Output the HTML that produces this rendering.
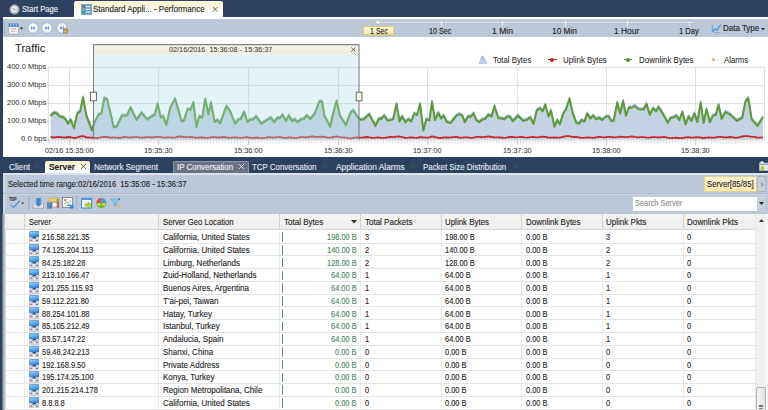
<!DOCTYPE html>
<html><head><meta charset="utf-8">
<style>
*{margin:0;padding:0;box-sizing:border-box}
html,body{width:768px;height:410px;overflow:hidden;background:#2f4161}
body{font-family:"Liberation Sans", sans-serif;font-size:8px;color:#1e1e1e;position:relative}
.a{position:absolute}
.t{position:absolute;white-space:pre;line-height:1;-webkit-text-stroke:0.12px currentColor}
</style></head><body>

<svg class="a" style="left:9px;top:3.9px" width="11" height="11" viewBox="0 0 11 11">
<defs><radialGradient id="clk" cx="0.4" cy="0.35" r="0.7"><stop offset="0" stop-color="#ffffff"/><stop offset="1" stop-color="#c8cacc"/></radialGradient></defs>
<circle cx="5.5" cy="5.5" r="4.9" fill="#a8acb0" stroke="#7c8086" stroke-width="0.6"/>
<circle cx="5.5" cy="5.5" r="3.7" fill="url(#clk)"/>
<path d="M5.5 5.5 L3.6 4" stroke="#666" stroke-width="0.8"/><path d="M5.5 5.5 L7 5.5" stroke="#888" stroke-width="0.6"/>
</svg>
<div class="a" style="left:74.3px;top:1px;width:149px;height:18px;background:linear-gradient(#fdf3d6 0,#fdf6e2 40%,#ffffff 58%);border-radius:2px 2px 0 0"></div>
<svg class="a" style="left:80.5px;top:4px" width="11" height="11" viewBox="0 0 11 11">
<rect x="0.4" y="0.4" width="10.2" height="10.2" fill="#5aa0dc" stroke="#7f9ab8" stroke-width="0.8"/>
<rect x="2" y="1.8" width="2" height="1.8" fill="#b04050"/><rect x="4.8" y="2" width="4.6" height="1.2" fill="#e6f0fa"/>
<rect x="2" y="4.6" width="2" height="1.6" fill="#e0a030"/><rect x="4.8" y="4.8" width="4.6" height="1.2" fill="#e6f0fa"/>
<rect x="2" y="7.2" width="2" height="1.8" fill="#20b040"/><rect x="4.8" y="7.5" width="4.6" height="1.2" fill="#e6f0fa"/>
</svg>
<svg class="a" style="left:212.30px;top:5.80px" width="6.6" height="6.6" viewBox="0 0 6.6 6.6"><path d="M1,1 L5.6,5.6 M5.6,1 L1,5.6" stroke="#5a5048" stroke-width="0.9"/></svg>
<div class="a" style="left:3px;top:17.2px;width:765px;height:2.2px;background:#ffffff"></div>
<div class="a" style="left:3px;top:19.4px;width:765px;height:17.2px;background:#bcc7d8"></div>
<div class="a" style="left:4.3px;top:21px;width:1px;height:14px;background:#a6b3c7"></div>
<svg class="a" style="left:8px;top:22.5px" width="17" height="12" viewBox="0 0 17 12">
<rect x="0.8" y="0.7" width="9.6" height="10.3" fill="#f2f2f2" stroke="#a8a8a8" stroke-width="0.6"/>
<rect x="0.8" y="0.7" width="9.6" height="3" fill="#3070d0"/>
<rect x="2" y="1.3" width="1.6" height="1.2" fill="#e8eefa"/><rect x="4.8" y="1.3" width="1.6" height="1.2" fill="#e8eefa"/><rect x="7.6" y="1.3" width="1.6" height="1.2" fill="#e8eefa"/>
<text x="2.8" y="9" font-size="4.6" fill="#888" font-family="Liberation Sans">17</text>
<path d="M11.8 4.6 L15.2 4.6 L13.5 6.4 Z" fill="#222"/>
</svg>
<svg class="a" style="left:25.799999999999997px;top:21.2px" width="14" height="14" viewBox="0 0 14 14"><defs><radialGradient id="cg32" cx="0.5" cy="0.4" r="0.6"><stop offset="0" stop-color="#ffffff"/><stop offset="1" stop-color="#e2eaf4"/></radialGradient></defs><circle cx="7" cy="7" r="5.3" fill="url(#cg32)" stroke="#9eb2cc" stroke-width="0.8"/><path d="M5.6 5.2 V8.8" stroke="#3a86d8" stroke-width="0.8"/><path d="M8.6 5.2 L6.2 7 L8.6 8.8 Z" fill="#3a86d8"/></svg>
<svg class="a" style="left:40.4px;top:21.2px" width="14" height="14" viewBox="0 0 14 14"><defs><radialGradient id="cg47" cx="0.5" cy="0.4" r="0.6"><stop offset="0" stop-color="#ffffff"/><stop offset="1" stop-color="#e2eaf4"/></radialGradient></defs><circle cx="7" cy="7" r="5.3" fill="url(#cg47)" stroke="#9eb2cc" stroke-width="0.8"/><path d="M8.4 5.2 V8.8" stroke="#3a86d8" stroke-width="0.8"/><path d="M5.4 5.2 L7.8 7 L5.4 8.8 Z" fill="#3a86d8"/></svg>
<svg class="a" style="left:55px;top:21.2px" width="14" height="14" viewBox="0 0 14 14"><defs><radialGradient id="cg62" cx="0.5" cy="0.4" r="0.6"><stop offset="0" stop-color="#ffffff"/><stop offset="1" stop-color="#e2eaf4"/></radialGradient></defs><circle cx="7" cy="7" r="5.3" fill="url(#cg62)" stroke="#9eb2cc" stroke-width="0.8"/><path d="M8.4 5.2 V8.8" stroke="#3a86d8" stroke-width="0.8"/><path d="M5.4 5.2 L7.8 7 L5.4 8.8 Z" fill="#3a86d8"/><rect x="8.6" y="8.6" width="3.8" height="3.4" fill="#e0b050" stroke="#705a30" stroke-width="0.5"/><path d="M9.4 8.6 V7.8 A1.1 1.1 0 0 1 11.6 7.8 V8.6" fill="none" stroke="#606060" stroke-width="0.5"/></svg>
<div class="a" style="left:378px;top:22.3px;width:315px;height:1px;background:#dde3ec"></div>
<div class="a" style="left:378px;top:23.3px;width:315px;height:0.8px;background:#b4bfcf"></div>
<div class="a" style="left:440.9px;top:20.5px;width:1px;height:5.5px;background:#eef1f5"></div>
<div class="a" style="left:501.9px;top:20.5px;width:1px;height:5.5px;background:#eef1f5"></div>
<div class="a" style="left:564.8px;top:20.5px;width:1px;height:5.5px;background:#eef1f5"></div>
<div class="a" style="left:626.5px;top:20.5px;width:1px;height:5.5px;background:#eef1f5"></div>
<div class="a" style="left:689.1px;top:20.5px;width:1px;height:5.5px;background:#eef1f5"></div>
<svg class="a" style="left:375px;top:20px" width="6" height="6" viewBox="0 0 6 6"><path d="M0.6 0.6 H5.4 V2.2 L3 5.2 L0.6 2.2 Z" fill="#fff" stroke="#a0aabb" stroke-width="0.6"/></svg>
<div class="a" style="left:363.3px;top:25.5px;width:31.2px;height:9.2px;background:linear-gradient(#fff8de,#fde8b0);border:1px solid #e9c96e"></div>
<svg class="a" style="left:711px;top:23.5px" width="11" height="10" viewBox="0 0 11 10">
<path d="M1.3 0.8 V8.2" stroke="#8090a0" stroke-width="0.9" fill="none"/>
<path d="M1.6 8 L3.6 5.2 L6 6 L9.6 0.8" stroke="#48a6f0" stroke-width="1.5" fill="none" stroke-linejoin="round"/>
<path d="M3 8.6 H9.6" stroke="#8898aa" stroke-width="0.8"/>
</svg>
<svg class="a" style="left:760.6px;top:27.8px" width="4" height="2.6" viewBox="0 0 4 2.6"><path d="M0 0 H4 L2 2.6Z" fill="#333"/></svg>
<div class="a" style="left:3px;top:36.6px;width:765px;height:120.3px;background:#ffffff"></div>
<svg class="a" style="left:477.6px;top:55px" width="10" height="9" viewBox="0 0 10 9"><path d="M0.8 8.4 L4 1.2 Q4.6 0.4 5.2 1.2 L9 8.4 Z" fill="#bcd0e8" stroke="#94b4dc" stroke-width="0.6"/><path d="M3.6 2.6 L5.6 2.6 L5 5 L4 5Z" fill="#9ab8e0"/></svg>
<div class="a" style="left:547.8px;top:59px;width:9px;height:1px;background:#d03030"></div><div class="a" style="left:550.3px;top:57.5px;width:4px;height:4px;border-radius:2px;background:#c82020"></div>
<div class="a" style="left:623.5px;top:59px;width:8px;height:1px;background:#5aa040"></div><div class="a" style="left:625.6px;top:57.5px;width:4px;height:4px;border-radius:2px;background:#4c9a30"></div>
<div class="a" style="left:711.6px;top:57.6px;width:3.8px;height:3.8px;border-radius:2px;background:#e0a860"></div>
<svg class="a" style="left:0;top:0" width="768" height="157" viewBox="0 0 768 157">
<line x1="47.3" y1="67.4" x2="764.5" y2="67.4" stroke="#dedede" stroke-width="1"/>
<line x1="47.3" y1="85.5" x2="764.5" y2="85.5" stroke="#dedede" stroke-width="1"/>
<line x1="47.3" y1="103.6" x2="764.5" y2="103.6" stroke="#dedede" stroke-width="1"/>
<line x1="47.3" y1="121.7" x2="764.5" y2="121.7" stroke="#dedede" stroke-width="1"/>
<line x1="47.3" y1="139.8" x2="764.5" y2="139.8" stroke="#dedede" stroke-width="1"/>
<line x1="69.5" y1="67" x2="69.5" y2="139.5" stroke="#dedede" stroke-width="1"/>
<line x1="158.6" y1="67" x2="158.6" y2="139.5" stroke="#dedede" stroke-width="1"/>
<line x1="248.6" y1="67" x2="248.6" y2="139.5" stroke="#dedede" stroke-width="1"/>
<line x1="338.5" y1="67" x2="338.5" y2="139.5" stroke="#dedede" stroke-width="1"/>
<line x1="427.5" y1="67" x2="427.5" y2="139.5" stroke="#dedede" stroke-width="1"/>
<line x1="517.3" y1="67" x2="517.3" y2="139.5" stroke="#dedede" stroke-width="1"/>
<line x1="606.5" y1="67" x2="606.5" y2="139.5" stroke="#dedede" stroke-width="1"/>
<line x1="695.5" y1="67" x2="695.5" y2="139.5" stroke="#dedede" stroke-width="1"/>
<line x1="764.5" y1="67" x2="764.5" y2="139.5" stroke="#dedede" stroke-width="1"/>
<line x1="48.4" y1="67" x2="48.4" y2="143" stroke="#dedede" stroke-width="1"/>
<path d="M49.7,139.5 V143 M52.7,139.5 V143 M55.7,139.5 V143 M58.6,139.5 V143 M61.6,139.5 V143 M64.6,139.5 V143 M67.6,139.5 V143 M70.6,139.5 V143 M73.5,139.5 V143 M76.5,139.5 V143 M79.5,139.5 V143 M82.5,139.5 V143 M85.5,139.5 V143 M88.4,139.5 V143 M91.4,139.5 V143 M94.4,139.5 V143 M97.4,139.5 V143 M100.4,139.5 V143 M103.3,139.5 V143 M106.3,139.5 V143 M109.3,139.5 V143 M112.3,139.5 V143 M115.3,139.5 V143 M118.2,139.5 V143 M121.2,139.5 V143 M124.2,139.5 V143 M127.2,139.5 V143 M130.2,139.5 V143 M133.1,139.5 V143 M136.1,139.5 V143 M139.1,139.5 V143 M142.1,139.5 V143 M145.1,139.5 V143 M148.0,139.5 V143 M151.0,139.5 V143 M154.0,139.5 V143 M157.0,139.5 V143 M160.0,139.5 V143 M162.9,139.5 V143 M165.9,139.5 V143 M168.9,139.5 V143 M171.9,139.5 V143 M174.9,139.5 V143 M177.8,139.5 V143 M180.8,139.5 V143 M183.8,139.5 V143 M186.8,139.5 V143 M189.8,139.5 V143 M192.7,139.5 V143 M195.7,139.5 V143 M198.7,139.5 V143 M201.7,139.5 V143 M204.7,139.5 V143 M207.6,139.5 V143 M210.6,139.5 V143 M213.6,139.5 V143 M216.6,139.5 V143 M219.6,139.5 V143 M222.5,139.5 V143 M225.5,139.5 V143 M228.5,139.5 V143 M231.5,139.5 V143 M234.5,139.5 V143 M237.4,139.5 V143 M240.4,139.5 V143 M243.4,139.5 V143 M246.4,139.5 V143 M249.4,139.5 V143 M252.3,139.5 V143 M255.3,139.5 V143 M258.3,139.5 V143 M261.3,139.5 V143 M264.3,139.5 V143 M267.2,139.5 V143 M270.2,139.5 V143 M273.2,139.5 V143 M276.2,139.5 V143 M279.2,139.5 V143 M282.1,139.5 V143 M285.1,139.5 V143 M288.1,139.5 V143 M291.1,139.5 V143 M294.1,139.5 V143 M297.0,139.5 V143 M300.0,139.5 V143 M303.0,139.5 V143 M306.0,139.5 V143 M309.0,139.5 V143 M311.9,139.5 V143 M314.9,139.5 V143 M317.9,139.5 V143 M320.9,139.5 V143 M323.9,139.5 V143 M326.8,139.5 V143 M329.8,139.5 V143 M332.8,139.5 V143 M335.8,139.5 V143 M338.8,139.5 V143 M341.7,139.5 V143 M344.7,139.5 V143 M347.7,139.5 V143 M350.7,139.5 V143 M353.7,139.5 V143 M356.6,139.5 V143 M359.6,139.5 V143 M362.6,139.5 V143 M365.6,139.5 V143 M368.6,139.5 V143 M371.5,139.5 V143 M374.5,139.5 V143 M377.5,139.5 V143 M380.5,139.5 V143 M383.5,139.5 V143 M386.4,139.5 V143 M389.4,139.5 V143 M392.4,139.5 V143 M395.4,139.5 V143 M398.4,139.5 V143 M401.3,139.5 V143 M404.3,139.5 V143 M407.3,139.5 V143 M410.3,139.5 V143 M413.3,139.5 V143 M416.2,139.5 V143 M419.2,139.5 V143 M422.2,139.5 V143 M425.2,139.5 V143 M428.2,139.5 V143 M431.1,139.5 V143 M434.1,139.5 V143 M437.1,139.5 V143 M440.1,139.5 V143 M443.1,139.5 V143 M446.0,139.5 V143 M449.0,139.5 V143 M452.0,139.5 V143 M455.0,139.5 V143 M458.0,139.5 V143 M460.9,139.5 V143 M463.9,139.5 V143 M466.9,139.5 V143 M469.9,139.5 V143 M472.9,139.5 V143 M475.8,139.5 V143 M478.8,139.5 V143 M481.8,139.5 V143 M484.8,139.5 V143 M487.8,139.5 V143 M490.7,139.5 V143 M493.7,139.5 V143 M496.7,139.5 V143 M499.7,139.5 V143 M502.7,139.5 V143 M505.6,139.5 V143 M508.6,139.5 V143 M511.6,139.5 V143 M514.6,139.5 V143 M517.6,139.5 V143 M520.5,139.5 V143 M523.5,139.5 V143 M526.5,139.5 V143 M529.5,139.5 V143 M532.5,139.5 V143 M535.4,139.5 V143 M538.4,139.5 V143 M541.4,139.5 V143 M544.4,139.5 V143 M547.4,139.5 V143 M550.3,139.5 V143 M553.3,139.5 V143 M556.3,139.5 V143 M559.3,139.5 V143 M562.3,139.5 V143 M565.2,139.5 V143 M568.2,139.5 V143 M571.2,139.5 V143 M574.2,139.5 V143 M577.2,139.5 V143 M580.1,139.5 V143 M583.1,139.5 V143 M586.1,139.5 V143 M589.1,139.5 V143 M592.1,139.5 V143 M595.0,139.5 V143 M598.0,139.5 V143 M601.0,139.5 V143 M604.0,139.5 V143 M607.0,139.5 V143 M609.9,139.5 V143 M612.9,139.5 V143 M615.9,139.5 V143 M618.9,139.5 V143 M621.9,139.5 V143 M624.8,139.5 V143 M627.8,139.5 V143 M630.8,139.5 V143 M633.8,139.5 V143 M636.8,139.5 V143 M639.7,139.5 V143 M642.7,139.5 V143 M645.7,139.5 V143 M648.7,139.5 V143 M651.7,139.5 V143 M654.6,139.5 V143 M657.6,139.5 V143 M660.6,139.5 V143 M663.6,139.5 V143 M666.6,139.5 V143 M669.5,139.5 V143 M672.5,139.5 V143 M675.5,139.5 V143 M678.5,139.5 V143 M681.5,139.5 V143 M684.4,139.5 V143 M687.4,139.5 V143 M690.4,139.5 V143 M693.4,139.5 V143 M696.4,139.5 V143 M699.3,139.5 V143 M702.3,139.5 V143 M705.3,139.5 V143 M708.3,139.5 V143 M711.3,139.5 V143 M714.2,139.5 V143 M717.2,139.5 V143 M720.2,139.5 V143 M723.2,139.5 V143 M726.2,139.5 V143 M729.1,139.5 V143 M732.1,139.5 V143 M735.1,139.5 V143 M738.1,139.5 V143 M741.1,139.5 V143 M744.0,139.5 V143 M747.0,139.5 V143 M750.0,139.5 V143 M753.0,139.5 V143 M756.0,139.5 V143 M758.9,139.5 V143 M761.9,139.5 V143" stroke="#d2d2d2" stroke-width="0.8"/>
<line x1="69.5" y1="139" x2="69.5" y2="145" stroke="#cccccc" stroke-width="1"/>
<line x1="158.6" y1="139" x2="158.6" y2="145" stroke="#cccccc" stroke-width="1"/>
<line x1="248.6" y1="139" x2="248.6" y2="145" stroke="#cccccc" stroke-width="1"/>
<line x1="338.5" y1="139" x2="338.5" y2="145" stroke="#cccccc" stroke-width="1"/>
<line x1="427.5" y1="139" x2="427.5" y2="145" stroke="#cccccc" stroke-width="1"/>
<line x1="517.3" y1="139" x2="517.3" y2="145" stroke="#cccccc" stroke-width="1"/>
<line x1="606.5" y1="139" x2="606.5" y2="145" stroke="#cccccc" stroke-width="1"/>
<line x1="695.5" y1="139" x2="695.5" y2="145" stroke="#cccccc" stroke-width="1"/>
<path d="M50.6,139.5 L50.6,114.4 L53.8,111.2 L56.7,111.9 L59.6,114.9 L63.3,115.9 L65.5,117.8 L68.1,122.2 L70.6,118.2 L74.0,126.6 L77.2,112.0 L80.1,109.8 L83.1,95.8 L86.4,114.1 L91.9,128.8 L94.8,120.0 L99.2,112.7 L101.4,112.0 L104.3,96.6 L107.2,98.0 L113.8,125.9 L116.7,125.1 L121.9,114.1 L127.0,113.9 L130.6,106.1 L136.5,118.5 L141.6,111.2 L147.3,118.2 L151.7,114.9 L154.6,113.4 L157.6,102.4 L160.9,116.3 L163.1,114.4 L166.4,123.7 L170.0,106.8 L175.1,97.3 L181.7,120.0 L183.9,119.3 L187.6,107.6 L190.5,108.3 L193.4,101.0 L196.4,125.6 L199.3,114.9 L202.2,116.3 L205.2,97.3 L208.4,112.7 L211.0,101.0 L214.7,120.7 L217.2,118.5 L220.2,121.8 L226.4,104.6 L230.0,109.8 L235.2,122.2 L237.9,118.5 L240.9,117.4 L244.1,110.5 L247.4,120.7 L250.4,118.2 L253.3,117.8 L256.2,114.9 L261.4,122.2 L265.7,119.3 L270.9,116.3 L274.2,120.7 L277.5,116.3 L279.7,116.8 L282.6,113.4 L286.0,119.3 L288.9,114.1 L292.1,119.7 L294.6,117.8 L297.7,120.7 L300.9,117.8 L303.8,117.4 L306.7,114.1 L310.4,117.4 L314.8,112.0 L319.2,100.2 L322.1,99.8 L324.3,114.1 L330.2,125.1 L332.9,112.7 L336.6,99.5 L340.0,114.1 L345.8,123.7 L350.5,111.2 L353.4,109.0 L357.1,114.9 L360.0,118.2 L363.7,117.8 L369.2,112.7 L375.4,124.4 L379.0,117.1 L381.2,117.4 L384.2,114.1 L387.8,119.3 L393.0,117.8 L396.6,102.4 L399.5,120.0 L402.0,114.9 L405.4,120.7 L408.3,117.8 L411.3,120.0 L414.2,112.0 L417.1,113.4 L420.0,102.4 L423.4,128.8 L426.3,117.8 L429.4,118.8 L432.0,100.2 L435.0,118.5 L438.2,111.2 L441.1,117.1 L443.7,114.1 L447.0,120.7 L450.6,121.5 L456.5,114.1 L459.4,112.7 L462.3,114.1 L464.8,120.7 L468.2,114.9 L470.7,115.3 L473.6,112.0 L476.2,118.5 L479.2,120.7 L482.8,117.8 L485.0,117.4 L488.3,113.4 L491.6,114.9 L494.5,104.6 L498.2,116.4 L501.1,116.8 L504.1,117.8 L507.7,114.9 L509.9,115.3 L512.8,119.7 L518.0,114.1 L522.9,119.3 L526.6,118.5 L530.2,115.9 L533.5,122.2 L536.8,109.0 L539.8,106.8 L542.7,109.8 L545.2,103.2 L548.6,114.9 L551.0,109.0 L554.4,125.1 L557.3,118.5 L559.8,122.9 L563.2,112.0 L566.1,107.6 L569.5,97.3 L572.7,111.2 L576.4,121.5 L579.3,121.8 L581.5,118.5 L584.4,120.0 L587.3,112.0 L590.3,117.1 L593.2,114.1 L596.1,117.8 L599.1,116.4 L602.0,118.5 L606.4,114.9 L608.6,114.9 L611.5,119.7 L613.7,119.3 L617.2,101.0 L620.1,112.0 L623.1,99.5 L626.0,114.1 L628.9,106.1 L631.8,106.1 L634.8,104.6 L638.4,107.6 L643.6,108.0 L646.5,102.4 L649.8,113.4 L653.1,106.8 L656.0,109.8 L658.6,105.4 L661.9,110.5 L667.7,121.2 L670.6,116.3 L673.6,115.9 L676.5,114.1 L679.4,118.5 L682.4,110.5 L685.6,122.9 L688.6,114.9 L691.4,119.3 L694.5,112.0 L697.3,120.7 L700.7,101.0 L703.6,121.5 L706.5,107.6 L709.9,120.7 L712.9,114.1 L715.8,113.4 L718.5,103.2 L721.7,117.4 L725.3,110.5 L729.7,112.7 L737.0,119.3 L742.2,116.4 L745.4,100.2 L748.3,96.6 L751.7,117.8 L757.5,124.4 L763.0,115.6 L763,139.5 Z" fill="#c5d2e3"/>
<path d="M50.6,114.4 L53.8,111.2 L56.7,111.9 L59.6,114.9 L63.3,115.9 L65.5,117.8 L68.1,122.2 L70.6,118.2 L74.0,126.6 L77.2,112.0 L80.1,109.8 L83.1,95.8 L86.4,114.1 L91.9,128.8 L94.8,120.0 L99.2,112.7 L101.4,112.0 L104.3,96.6 L107.2,98.0 L113.8,125.9 L116.7,125.1 L121.9,114.1 L127.0,113.9 L130.6,106.1 L136.5,118.5 L141.6,111.2 L147.3,118.2 L151.7,114.9 L154.6,113.4 L157.6,102.4 L160.9,116.3 L163.1,114.4 L166.4,123.7 L170.0,106.8 L175.1,97.3 L181.7,120.0 L183.9,119.3 L187.6,107.6 L190.5,108.3 L193.4,101.0 L196.4,125.6 L199.3,114.9 L202.2,116.3 L205.2,97.3 L208.4,112.7 L211.0,101.0 L214.7,120.7 L217.2,118.5 L220.2,121.8 L226.4,104.6 L230.0,109.8 L235.2,122.2 L237.9,118.5 L240.9,117.4 L244.1,110.5 L247.4,120.7 L250.4,118.2 L253.3,117.8 L256.2,114.9 L261.4,122.2 L265.7,119.3 L270.9,116.3 L274.2,120.7 L277.5,116.3 L279.7,116.8 L282.6,113.4 L286.0,119.3 L288.9,114.1 L292.1,119.7 L294.6,117.8 L297.7,120.7 L300.9,117.8 L303.8,117.4 L306.7,114.1 L310.4,117.4 L314.8,112.0 L319.2,100.2 L322.1,99.8 L324.3,114.1 L330.2,125.1 L332.9,112.7 L336.6,99.5 L340.0,114.1 L345.8,123.7 L350.5,111.2 L353.4,109.0 L357.1,114.9 L360.0,118.2 L363.7,117.8 L369.2,112.7 L375.4,124.4 L379.0,117.1 L381.2,117.4 L384.2,114.1 L387.8,119.3 L393.0,117.8 L396.6,102.4 L399.5,120.0 L402.0,114.9 L405.4,120.7 L408.3,117.8 L411.3,120.0 L414.2,112.0 L417.1,113.4 L420.0,102.4 L423.4,128.8 L426.3,117.8 L429.4,118.8 L432.0,100.2 L435.0,118.5 L438.2,111.2 L441.1,117.1 L443.7,114.1 L447.0,120.7 L450.6,121.5 L456.5,114.1 L459.4,112.7 L462.3,114.1 L464.8,120.7 L468.2,114.9 L470.7,115.3 L473.6,112.0 L476.2,118.5 L479.2,120.7 L482.8,117.8 L485.0,117.4 L488.3,113.4 L491.6,114.9 L494.5,104.6 L498.2,116.4 L501.1,116.8 L504.1,117.8 L507.7,114.9 L509.9,115.3 L512.8,119.7 L518.0,114.1 L522.9,119.3 L526.6,118.5 L530.2,115.9 L533.5,122.2 L536.8,109.0 L539.8,106.8 L542.7,109.8 L545.2,103.2 L548.6,114.9 L551.0,109.0 L554.4,125.1 L557.3,118.5 L559.8,122.9 L563.2,112.0 L566.1,107.6 L569.5,97.3 L572.7,111.2 L576.4,121.5 L579.3,121.8 L581.5,118.5 L584.4,120.0 L587.3,112.0 L590.3,117.1 L593.2,114.1 L596.1,117.8 L599.1,116.4 L602.0,118.5 L606.4,114.9 L608.6,114.9 L611.5,119.7 L613.7,119.3 L617.2,101.0 L620.1,112.0 L623.1,99.5 L626.0,114.1 L628.9,106.1 L631.8,106.1 L634.8,104.6 L638.4,107.6 L643.6,108.0 L646.5,102.4 L649.8,113.4 L653.1,106.8 L656.0,109.8 L658.6,105.4 L661.9,110.5 L667.7,121.2 L670.6,116.3 L673.6,115.9 L676.5,114.1 L679.4,118.5 L682.4,110.5 L685.6,122.9 L688.6,114.9 L691.4,119.3 L694.5,112.0 L697.3,120.7 L700.7,101.0 L703.6,121.5 L706.5,107.6 L709.9,120.7 L712.9,114.1 L715.8,113.4 L718.5,103.2 L721.7,117.4 L725.3,110.5 L729.7,112.7 L737.0,119.3 L742.2,116.4 L745.4,100.2 L748.3,96.6 L751.7,117.8 L757.5,124.4 L763.0,115.6" fill="none" stroke="#9dbae0" stroke-width="1.3" stroke-linejoin="round"/>
<path d="M50.6,116.0 L53.8,112.8 L56.7,113.5 L59.6,116.5 L63.3,117.5 L65.5,119.4 L68.1,123.8 L70.6,119.8 L74.0,128.2 L77.2,113.6 L80.1,111.4 L83.1,97.4 L86.4,115.7 L91.9,130.4 L94.8,121.6 L99.2,114.3 L101.4,113.6 L104.3,98.2 L107.2,99.6 L113.8,127.5 L116.7,126.7 L121.9,115.7 L127.0,115.5 L130.6,107.7 L136.5,120.1 L141.6,112.8 L147.3,119.8 L151.7,116.5 L154.6,115.0 L157.6,104.0 L160.9,117.9 L163.1,116.0 L166.4,125.3 L170.0,108.4 L175.1,98.9 L181.7,121.6 L183.9,120.9 L187.6,109.2 L190.5,109.9 L193.4,102.6 L196.4,127.2 L199.3,116.5 L202.2,117.9 L205.2,98.9 L208.4,114.3 L211.0,102.6 L214.7,122.3 L217.2,120.1 L220.2,123.4 L226.4,106.2 L230.0,111.4 L235.2,123.8 L237.9,120.1 L240.9,119.0 L244.1,112.1 L247.4,122.3 L250.4,119.8 L253.3,119.4 L256.2,116.5 L261.4,123.8 L265.7,120.9 L270.9,117.9 L274.2,122.3 L277.5,117.9 L279.7,118.4 L282.6,115.0 L286.0,120.9 L288.9,115.7 L292.1,121.3 L294.6,119.4 L297.7,122.3 L300.9,119.4 L303.8,119.0 L306.7,115.7 L310.4,119.0 L314.8,113.6 L319.2,101.8 L322.1,101.4 L324.3,115.7 L330.2,126.7 L332.9,114.3 L336.6,101.1 L340.0,115.7 L345.8,125.3 L350.5,112.8 L353.4,110.6 L357.1,116.5 L360.0,119.8 L363.7,119.4 L369.2,114.3 L375.4,126.0 L379.0,118.7 L381.2,119.0 L384.2,115.7 L387.8,120.9 L393.0,119.4 L396.6,104.0 L399.5,121.6 L402.0,116.5 L405.4,122.3 L408.3,119.4 L411.3,121.6 L414.2,113.6 L417.1,115.0 L420.0,104.0 L423.4,130.4 L426.3,119.4 L429.4,120.4 L432.0,101.8 L435.0,120.1 L438.2,112.8 L441.1,118.7 L443.7,115.7 L447.0,122.3 L450.6,123.1 L456.5,115.7 L459.4,114.3 L462.3,115.7 L464.8,122.3 L468.2,116.5 L470.7,116.9 L473.6,113.6 L476.2,120.1 L479.2,122.3 L482.8,119.4 L485.0,119.0 L488.3,115.0 L491.6,116.5 L494.5,106.2 L498.2,118.0 L501.1,118.4 L504.1,119.4 L507.7,116.5 L509.9,116.9 L512.8,121.3 L518.0,115.7 L522.9,120.9 L526.6,120.1 L530.2,117.5 L533.5,123.8 L536.8,110.6 L539.8,108.4 L542.7,111.4 L545.2,104.8 L548.6,116.5 L551.0,110.6 L554.4,126.7 L557.3,120.1 L559.8,124.5 L563.2,113.6 L566.1,109.2 L569.5,98.9 L572.7,112.8 L576.4,123.1 L579.3,123.4 L581.5,120.1 L584.4,121.6 L587.3,113.6 L590.3,118.7 L593.2,115.7 L596.1,119.4 L599.1,118.0 L602.0,120.1 L606.4,116.5 L608.6,116.5 L611.5,121.3 L613.7,120.9 L617.2,102.6 L620.1,113.6 L623.1,101.1 L626.0,115.7 L628.9,107.7 L631.8,107.7 L634.8,106.2 L638.4,109.2 L643.6,109.6 L646.5,104.0 L649.8,115.0 L653.1,108.4 L656.0,111.4 L658.6,107.0 L661.9,112.1 L667.7,122.8 L670.6,117.9 L673.6,117.5 L676.5,115.7 L679.4,120.1 L682.4,112.1 L685.6,124.5 L688.6,116.5 L691.4,120.9 L694.5,113.6 L697.3,122.3 L700.7,102.6 L703.6,123.1 L706.5,109.2 L709.9,122.3 L712.9,115.7 L715.8,115.0 L718.5,104.8 L721.7,119.0 L725.3,112.1 L729.7,114.3 L737.0,120.9 L742.2,118.0 L745.4,101.8 L748.3,98.2 L751.7,119.4 L757.5,126.0 L763.0,117.2" fill="none" stroke="#5b9b35" stroke-width="2" stroke-linejoin="round"/>
<path d="M50.6,137.0 L53.6,137.5 L56.6,137.2 L59.5,136.9 L62.5,137.4 L65.5,137.5 L68.5,137.0 L71.5,137.3 L74.4,138.0 L77.4,137.3 L80.4,136.3 L83.4,136.1 L86.4,137.3 L89.3,137.5 L92.3,137.6 L95.3,138.0 L98.3,138.0 L101.3,137.2 L104.2,136.8 L107.2,137.0 L110.2,137.6 L113.2,137.5 L116.2,137.7 L119.1,138.0 L122.1,137.5 L125.1,136.9 L128.1,137.3 L131.1,137.5 L134.0,137.1 L137.0,137.1 L140.0,137.7 L143.0,137.7 L146.0,137.1 L148.9,137.1 L151.9,137.5 L154.9,137.1 L157.9,136.6 L160.9,137.1 L163.8,137.6 L166.8,137.3 L169.8,137.3 L172.8,137.6 L175.8,137.3 L178.7,136.4 L181.7,136.6 L184.7,137.2 L187.7,137.2 L190.7,137.0 L193.6,137.4 L196.6,137.8 L199.6,137.5 L202.6,137.3 L205.6,137.8 L208.5,137.9 L211.5,137.2 L214.5,137.1 L217.5,137.5 L220.5,137.4 L223.4,137.0 L226.4,137.4 L229.4,137.9 L232.4,137.6 L235.4,137.3 L238.3,137.6 L241.3,137.8 L244.3,137.3 L247.3,137.2 L250.3,137.9 L253.2,137.9 L256.2,137.5 L259.2,137.8 L262.2,138.2 L265.2,137.8 L268.1,137.2 L271.1,137.4 L274.1,137.6 L277.1,137.1 L280.1,137.1 L283.0,137.7 L286.0,137.9 L289.0,137.5 L292.0,137.6 L295.0,138.1 L297.9,137.7 L300.9,137.1 L303.9,137.1 L306.9,137.3 L309.9,136.7 L312.8,136.4 L315.8,136.9 L318.8,136.9 L321.8,136.7 L324.8,136.9 L327.7,137.6 L330.7,137.6 L333.7,137.0 L336.7,136.4 L339.7,137.2 L342.6,137.4 L345.6,137.6 L348.6,138.1 L351.6,138.3 L354.6,137.6 L357.5,137.4 L360.5,137.7 L363.5,137.5 L366.5,137.0 L369.5,137.3 L372.4,137.8 L375.4,137.7 L378.4,137.4 L381.4,137.8 L384.4,137.9 L387.3,137.3 L390.3,137.0 L393.3,137.2 L396.3,136.7 L399.3,136.5 L402.2,137.2 L405.2,137.9 L408.2,137.7 L411.2,137.3 L414.2,137.6 L417.1,137.8 L420.1,137.2 L423.1,137.3 L426.1,137.6 L429.1,137.3 L432.0,136.4 L435.0,137.0 L438.0,137.9 L441.0,138.0 L444.0,137.4 L446.9,137.5 L449.9,137.7 L452.9,137.2 L455.9,136.9 L458.9,137.5 L461.8,137.7 L464.8,137.4 L467.8,137.4 L470.8,137.9 L473.8,137.6 L476.7,136.9 L479.7,136.9 L482.7,137.2 L485.7,136.8 L488.7,136.4 L491.6,137.0 L494.6,137.3 L497.6,137.3 L500.6,137.5 L503.6,137.9 L506.5,137.6 L509.5,136.9 L512.5,137.0 L515.5,137.4 L518.5,137.2 L521.4,136.9 L524.4,137.4 L527.4,137.7 L530.4,137.2 L533.4,136.9 L536.3,137.3 L539.3,137.1 L542.3,136.6 L545.3,136.8 L548.3,137.6 L551.2,137.6 L554.2,137.5 L557.2,137.7 L560.2,137.7 L563.2,136.9 L566.1,136.2 L569.1,136.2 L572.1,136.9 L575.1,137.0 L578.1,137.1 L581.0,137.8 L584.0,137.8 L587.0,137.4 L590.0,137.6 L593.0,137.9 L595.9,137.4 L598.9,136.9 L601.9,137.2 L604.9,137.3 L607.9,136.8 L610.8,136.8 L613.8,137.3 L616.8,137.2 L619.8,136.7 L622.8,136.8 L625.7,137.2 L628.7,136.8 L631.7,136.4 L634.7,136.9 L637.7,137.3 L640.6,137.1 L643.6,137.1 L646.6,137.7 L649.6,137.7 L652.6,137.1 L655.5,137.1 L658.5,137.5 L661.5,137.2 L664.5,136.9 L667.5,137.6 L670.4,138.2 L673.4,137.8 L676.4,137.7 L679.4,138.1 L682.4,138.1 L685.3,137.4 L688.3,137.2 L691.3,137.7 L694.3,137.5 L697.3,137.1 L700.2,137.5 L703.2,138.0 L706.2,137.6 L709.2,137.3 L712.2,137.6 L715.1,137.6 L718.1,136.9 L721.1,136.8 L724.1,137.3 L727.1,137.3 L730.0,137.0 L733.0,137.3 L736.0,137.8 L739.0,137.4 L742.0,136.5 L744.9,136.1 L747.9,136.1 L750.9,136.6 L753.9,136.9 L756.9,137.5 L759.8,137.7 L762.8,137.3" fill="none" stroke="#c62a2c" stroke-width="1.8" stroke-linejoin="round"/>
<rect x="93.5" y="53.6" width="265.5" height="85.9" fill="rgba(172,220,226,0.32)"/>
<rect x="93.5" y="45" width="265.5" height="8.6" fill="url(#hg)"/>
<defs><linearGradient id="hg" x1="0" y1="0" x2="0" y2="1"><stop offset="0" stop-color="#f8f6ee"/><stop offset="1" stop-color="#efeada"/></linearGradient></defs>
<path d="M93.5,139.5 V44.6 H359 V139.5" fill="none" stroke="#808080" stroke-width="1.1"/>
<rect x="90.6" y="92.2" width="5.8" height="8.6" fill="#fbf9ec" stroke="#5a5a5a" stroke-width="0.9"/>
<rect x="356.2" y="92.2" width="5.8" height="8.6" fill="#fbf9ec" stroke="#5a5a5a" stroke-width="0.9"/>
<path d="M351.3,47.5 L355.5,51.6 M355.5,47.5 L351.3,51.6" stroke="#505050" stroke-width="0.9"/>
</svg>
<div class="a" style="left:0;top:156.9px;width:768px;height:16.2px;background:#2f4161"></div>
<svg class="a" style="left:33.75px;top:163.55px" width="6.5" height="6.5" viewBox="0 0 6.5 6.5"><path d="M1,1 L5.5,5.5 M5.5,1 L1,5.5" stroke="#44536e" stroke-width="0.9"/></svg>
<svg class="a" style="left:321.75px;top:163.55px" width="6.5" height="6.5" viewBox="0 0 6.5 6.5"><path d="M1,1 L5.5,5.5 M5.5,1 L1,5.5" stroke="#44536e" stroke-width="0.9"/></svg>
<svg class="a" style="left:409.75px;top:163.55px" width="6.5" height="6.5" viewBox="0 0 6.5 6.5"><path d="M1,1 L5.5,5.5 M5.5,1 L1,5.5" stroke="#44536e" stroke-width="0.9"/></svg>
<svg class="a" style="left:511.75px;top:163.55px" width="6.5" height="6.5" viewBox="0 0 6.5 6.5"><path d="M1,1 L5.5,5.5 M5.5,1 L1,5.5" stroke="#44536e" stroke-width="0.9"/></svg>
<div class="a" style="left:45.1px;top:161.1px;width:44.9px;height:13px;background:linear-gradient(#fcefcc,#fdf4dc 35%,#ffffff 60%);border-radius:2px 2px 0 0"></div>
<svg class="a" style="left:79.90px;top:163.30px" width="7" height="7" viewBox="0 0 7 7"><path d="M1,1 L6,6 M6,1 L1,6" stroke="#555" stroke-width="0.9"/></svg>
<div class="a" style="left:173px;top:161px;width:75.5px;height:13px;background:#6a7282;border:1px solid #8c94a2;border-bottom:none;border-radius:2px 2px 0 0"></div>
<svg class="a" style="left:238.00px;top:163.30px" width="7" height="7" viewBox="0 0 7 7"><path d="M1,1 L6,6 M6,1 L1,6" stroke="#e4e6ea" stroke-width="0.9"/></svg>
<svg class="a" style="left:758.6px;top:161.4px" width="10" height="10" viewBox="0 0 10 10"><path d="M0.5 2.2 L2 0.6 H4 L5 2 H10 V9.6 H0.5Z" fill="#f4f6f8" stroke="#b4bcc6" stroke-width="0.6"/><rect x="1" y="2.6" width="9" height="1.6" fill="#90a8c8"/><rect x="1.6" y="5.2" width="3.6" height="3.8" fill="#b8d030"/><rect x="6" y="5.4" width="3" height="0.8" fill="#c8d4e4"/><rect x="6" y="7" width="3" height="0.8" fill="#c8d4e4"/></svg>
<div class="a" style="left:3px;top:173.1px;width:765px;height:40.5px;background:#bcc7d8"></div>
<div class="a" style="left:3px;top:173.1px;width:765px;height:1.9px;background:#dde3ec"></div>
<div class="a" style="left:3px;top:175px;width:1.8px;height:38.5px;background:#d0d8e4"></div>
<div class="a" style="left:3px;top:192.6px;width:765px;height:1px;background:#aeb9ca"></div>
<div class="a" style="left:3px;top:193.6px;width:765px;height:1px;background:#cdd5e1"></div>
<div class="a" style="left:703.5px;top:176px;width:53.2px;height:16.2px;background:linear-gradient(#fff6d8,#fde8b4);border:1px solid #e6cf90"></div>
<div class="a" style="left:756.7px;top:176px;width:9.8px;height:16.2px;background:#c6cfdc;border:1px solid #aab5c6"></div>
<svg class="a" style="left:760px;top:181px" width="5" height="7" viewBox="0 0 5 7"><path d="M1 0.5 L4 3.5 L1 6.5Z" fill="#98a2b2"/></svg>
<svg class="a" style="left:6px;top:194px" width="122" height="18" viewBox="0 0 122 18">
<text x="3" y="7.4" font-size="4.6" font-weight="bold" fill="#2a2a2a" font-family="Liberation Sans" textLength="7.6" lengthAdjust="spacingAndGlyphs">TBP</text>
<path d="M4.6 10.6 L7.4 13.4 L13.8 7" stroke="#3d8fe0" stroke-width="1.1" fill="none"/>
<path d="M15.2 8.6 H18 L16.6 10.4Z" fill="#333"/>
<rect x="22.4" y="2" width="0.8" height="14" fill="#98a6bc"/>
<path d="M27.2 9.5 L29 7.8 H35.8 L37.6 9.5 V14.2 H27.2Z" fill="#eceef0" stroke="#7e8690" stroke-width="0.6"/>
<path d="M28.4 10.2 H36.4 V12.6 H28.4Z" fill="#d6d9dd"/>
<path d="M30.6 4.4 H34.4 V9.4 H35.8 L32.5 12.4 L29.2 9.4 H30.6Z" fill="#3f86d8" stroke="#2e6ab8" stroke-width="0.4"/>
<rect x="41.4" y="8.8" width="4.4" height="5.4" fill="#5a84b8" stroke="#48607e" stroke-width="0.4"/>
<path d="M43 4.6 L45.4 3.8 H49.6 L50.4 4.6 H52.6 V8 H43Z" fill="#ecc878" stroke="#b89850" stroke-width="0.4"/>
<circle cx="48.6" cy="10.8" r="2.6" fill="#f4f6f8" stroke="#7a8088" stroke-width="0.6"/>
<rect x="51.2" y="7.4" width="1.8" height="6.6" fill="#d06030"/><rect x="50.6" y="4.6" width="2.2" height="3" fill="#80b040"/>
<rect x="56.6" y="3.6" width="10" height="10" fill="#f6f6f6" stroke="#6a7078" stroke-width="0.7"/>
<rect x="58" y="5" width="7.2" height="7.2" fill="#fafaf4"/><rect x="58.4" y="5.2" width="1.6" height="2" fill="#d04040"/>
<path d="M58.2 10.4 L60.4 8.2 L62.2 9.4 L65 6.6" stroke="#50a050" stroke-width="0.8" fill="none"/>
<path d="M59.6 12 Q62.6 9.2 66.2 11.4 L67.6 10 V14.4 H63 L64.6 12.8 Q62.4 11.4 59.6 12Z" fill="#3c80d0"/>
<rect x="70.6" y="2" width="0.8" height="14" fill="#98a6bc"/>
<rect x="75.6" y="4.4" width="10" height="9.6" fill="#f8fbff" stroke="#3a80d0" stroke-width="1"/>
<rect x="75.6" y="4.4" width="10" height="1.6" fill="#5a98dc"/>
<rect x="77.2" y="7.2" width="5" height="5" fill="#e6eaee"/>
<path d="M79.4 9.8 H82.2 V8 L86 11 L82.2 14 V12.2 H79.4Z" fill="#b8d020" stroke="#80a010" stroke-width="0.4"/>
<path d="M95.3 9 L95.3 4 A5 5 0 0 0 90.3 9Z" fill="#d84848"/>
<path d="M95.3 9 L95.3 4 A5 5 0 0 1 100.3 9Z" fill="#4a9ad8"/>
<path d="M90.3 9 A5 5 0 0 0 100.3 9Z" fill="#6ab030"/>
<path d="M91 9.6 H93.2 V8.6 L95.2 10.4 L93.2 12.2 V11.2 H91Z" fill="#e0e040"/><path d="M95.6 9.6 H97.8 V8.6 L99.8 10.4 L97.8 12.2 V11.2 H95.6Z" fill="#e0e040"/>
<path d="M104.8 5 H113.8 L110 9.2 V12.4 L108.4 11.4 V9.2Z" fill="#8ccaf0" stroke="#4a90d0" stroke-width="0.5"/>
<circle cx="113.4" cy="5.2" r="0.9" fill="#2a70c8"/>
<path d="M112 9 L114.6 10.6 L112.8 11.6 L114.4 14.4 L110.8 12.4 L112.4 11.4Z" fill="#eab060"/>
</svg>
<div class="a" style="left:3px;top:213.6px;width:765px;height:196.4px;background:#ffffff"></div>
<div class="a" style="left:2px;top:213.6px;width:3.5px;height:196.4px;background:linear-gradient(90deg,#5a6a84,#a8b4c4 45%,#e4e8ee)"></div>
<div class="a" style="left:5px;top:213.6px;width:750.4px;height:16.6px;background:linear-gradient(#f4f4f2,#eeeeec);border-bottom:1px solid #d4d4d4"></div>
<div class="a" style="left:23.9px;top:214.2px;width:1px;height:15.5px;background:#d2d2d2"></div>
<div class="a" style="left:158.2px;top:214.2px;width:1px;height:15.5px;background:#d2d2d2"></div>
<div class="a" style="left:279.3px;top:214.2px;width:1px;height:15.5px;background:#d2d2d2"></div>
<div class="a" style="left:359.9px;top:214.2px;width:1px;height:15.5px;background:#d2d2d2"></div>
<div class="a" style="left:441.0px;top:214.2px;width:1px;height:15.5px;background:#d2d2d2"></div>
<div class="a" style="left:520.9px;top:214.2px;width:1px;height:15.5px;background:#d2d2d2"></div>
<div class="a" style="left:602.3px;top:214.2px;width:1px;height:15.5px;background:#d2d2d2"></div>
<div class="a" style="left:682.5px;top:214.2px;width:1px;height:15.5px;background:#d2d2d2"></div>
<svg class="a" style="left:350.5px;top:220.3px" width="6" height="4" viewBox="0 0 6 4"><path d="M0 0 H6 L3 3.5Z" fill="#333"/></svg>
<div class="a" style="left:23.9px;top:230.6px;width:1px;height:180px;background:#ececec"></div>
<div class="a" style="left:158.2px;top:230.6px;width:1px;height:180px;background:#ececec"></div>
<div class="a" style="left:279.3px;top:230.6px;width:1px;height:180px;background:#ececec"></div>
<div class="a" style="left:359.9px;top:230.6px;width:1px;height:180px;background:#ececec"></div>
<div class="a" style="left:441.0px;top:230.6px;width:1px;height:180px;background:#ececec"></div>
<div class="a" style="left:520.9px;top:230.6px;width:1px;height:180px;background:#ececec"></div>
<div class="a" style="left:602.3px;top:230.6px;width:1px;height:180px;background:#ececec"></div>
<div class="a" style="left:682.5px;top:230.6px;width:1px;height:180px;background:#ececec"></div>
<div class="a" style="left:5px;top:242.66px;width:750.4px;height:1px;background:#e4e4e4"></div>
<svg class="a" style="left:28.8px;top:230.90px" width="10.4" height="11.6" viewBox="0 0 10.4 11.6"><defs><linearGradient id="mg0" x1="0" y1="0" x2="0.3" y2="1"><stop offset="0" stop-color="#a8d8fa"/><stop offset="0.5" stop-color="#62aef0"/><stop offset="1" stop-color="#3a84d8"/></linearGradient></defs><rect x="0.4" y="0.5" width="9.6" height="5.6" rx="0.6" fill="url(#mg0)" stroke="#3c70b0" stroke-width="0.6"/><rect x="3.6" y="6.1" width="3.2" height="1.5" fill="#283850"/><rect x="0.4" y="7.8" width="9.6" height="3.4" rx="0.5" fill="#eef2f6" stroke="#6e84a4" stroke-width="0.6"/><rect x="1.4" y="8.8" width="2" height="1.3" fill="#e04848"/><rect x="6.8" y="8.8" width="2.2" height="1.3" fill="#707880"/></svg>
<div class="a" style="left:282px;top:232.30px;width:1.1px;height:9.6px;background:#5a9a6a"></div>
<div class="a" style="left:5px;top:255.42px;width:750.4px;height:1px;background:#e4e4e4"></div>
<svg class="a" style="left:28.8px;top:243.66px" width="10.4" height="11.6" viewBox="0 0 10.4 11.6"><defs><linearGradient id="mg1" x1="0" y1="0" x2="0.3" y2="1"><stop offset="0" stop-color="#a8d8fa"/><stop offset="0.5" stop-color="#62aef0"/><stop offset="1" stop-color="#3a84d8"/></linearGradient></defs><rect x="0.4" y="0.5" width="9.6" height="5.6" rx="0.6" fill="url(#mg1)" stroke="#3c70b0" stroke-width="0.6"/><rect x="3.6" y="6.1" width="3.2" height="1.5" fill="#283850"/><rect x="0.4" y="7.8" width="9.6" height="3.4" rx="0.5" fill="#eef2f6" stroke="#6e84a4" stroke-width="0.6"/><rect x="1.4" y="8.8" width="2" height="1.3" fill="#e04848"/><rect x="6.8" y="8.8" width="2.2" height="1.3" fill="#707880"/></svg>
<div class="a" style="left:282px;top:245.06px;width:1.1px;height:9.6px;background:#5a9a6a"></div>
<div class="a" style="left:5px;top:268.18px;width:750.4px;height:1px;background:#e4e4e4"></div>
<svg class="a" style="left:28.8px;top:256.42px" width="10.4" height="11.6" viewBox="0 0 10.4 11.6"><defs><linearGradient id="mg2" x1="0" y1="0" x2="0.3" y2="1"><stop offset="0" stop-color="#a8d8fa"/><stop offset="0.5" stop-color="#62aef0"/><stop offset="1" stop-color="#3a84d8"/></linearGradient></defs><rect x="0.4" y="0.5" width="9.6" height="5.6" rx="0.6" fill="url(#mg2)" stroke="#3c70b0" stroke-width="0.6"/><rect x="3.6" y="6.1" width="3.2" height="1.5" fill="#283850"/><rect x="0.4" y="7.8" width="9.6" height="3.4" rx="0.5" fill="#eef2f6" stroke="#6e84a4" stroke-width="0.6"/><rect x="1.4" y="8.8" width="2" height="1.3" fill="#e04848"/><rect x="6.8" y="8.8" width="2.2" height="1.3" fill="#707880"/></svg>
<div class="a" style="left:282px;top:257.82px;width:1.1px;height:9.6px;background:#5a9a6a"></div>
<div class="a" style="left:5px;top:280.94px;width:750.4px;height:1px;background:#e4e4e4"></div>
<svg class="a" style="left:28.8px;top:269.18px" width="10.4" height="11.6" viewBox="0 0 10.4 11.6"><defs><linearGradient id="mg3" x1="0" y1="0" x2="0.3" y2="1"><stop offset="0" stop-color="#a8d8fa"/><stop offset="0.5" stop-color="#62aef0"/><stop offset="1" stop-color="#3a84d8"/></linearGradient></defs><rect x="0.4" y="0.5" width="9.6" height="5.6" rx="0.6" fill="url(#mg3)" stroke="#3c70b0" stroke-width="0.6"/><rect x="3.6" y="6.1" width="3.2" height="1.5" fill="#283850"/><rect x="0.4" y="7.8" width="9.6" height="3.4" rx="0.5" fill="#eef2f6" stroke="#6e84a4" stroke-width="0.6"/><rect x="1.4" y="8.8" width="2" height="1.3" fill="#e04848"/><rect x="6.8" y="8.8" width="2.2" height="1.3" fill="#707880"/></svg>
<div class="a" style="left:282px;top:270.58px;width:1.1px;height:9.6px;background:#5a9a6a"></div>
<div class="a" style="left:5px;top:293.70px;width:750.4px;height:1px;background:#e4e4e4"></div>
<svg class="a" style="left:28.8px;top:281.94px" width="10.4" height="11.6" viewBox="0 0 10.4 11.6"><defs><linearGradient id="mg4" x1="0" y1="0" x2="0.3" y2="1"><stop offset="0" stop-color="#a8d8fa"/><stop offset="0.5" stop-color="#62aef0"/><stop offset="1" stop-color="#3a84d8"/></linearGradient></defs><rect x="0.4" y="0.5" width="9.6" height="5.6" rx="0.6" fill="url(#mg4)" stroke="#3c70b0" stroke-width="0.6"/><rect x="3.6" y="6.1" width="3.2" height="1.5" fill="#283850"/><rect x="0.4" y="7.8" width="9.6" height="3.4" rx="0.5" fill="#eef2f6" stroke="#6e84a4" stroke-width="0.6"/><rect x="1.4" y="8.8" width="2" height="1.3" fill="#e04848"/><rect x="6.8" y="8.8" width="2.2" height="1.3" fill="#707880"/></svg>
<div class="a" style="left:282px;top:283.34px;width:1.1px;height:9.6px;background:#5a9a6a"></div>
<div class="a" style="left:5px;top:306.46px;width:750.4px;height:1px;background:#e4e4e4"></div>
<svg class="a" style="left:28.8px;top:294.70px" width="10.4" height="11.6" viewBox="0 0 10.4 11.6"><defs><linearGradient id="mg5" x1="0" y1="0" x2="0.3" y2="1"><stop offset="0" stop-color="#a8d8fa"/><stop offset="0.5" stop-color="#62aef0"/><stop offset="1" stop-color="#3a84d8"/></linearGradient></defs><rect x="0.4" y="0.5" width="9.6" height="5.6" rx="0.6" fill="url(#mg5)" stroke="#3c70b0" stroke-width="0.6"/><rect x="3.6" y="6.1" width="3.2" height="1.5" fill="#283850"/><rect x="0.4" y="7.8" width="9.6" height="3.4" rx="0.5" fill="#eef2f6" stroke="#6e84a4" stroke-width="0.6"/><rect x="1.4" y="8.8" width="2" height="1.3" fill="#e04848"/><rect x="6.8" y="8.8" width="2.2" height="1.3" fill="#707880"/></svg>
<div class="a" style="left:282px;top:296.10px;width:1.1px;height:9.6px;background:#5a9a6a"></div>
<div class="a" style="left:5px;top:319.22px;width:750.4px;height:1px;background:#e4e4e4"></div>
<svg class="a" style="left:28.8px;top:307.46px" width="10.4" height="11.6" viewBox="0 0 10.4 11.6"><defs><linearGradient id="mg6" x1="0" y1="0" x2="0.3" y2="1"><stop offset="0" stop-color="#a8d8fa"/><stop offset="0.5" stop-color="#62aef0"/><stop offset="1" stop-color="#3a84d8"/></linearGradient></defs><rect x="0.4" y="0.5" width="9.6" height="5.6" rx="0.6" fill="url(#mg6)" stroke="#3c70b0" stroke-width="0.6"/><rect x="3.6" y="6.1" width="3.2" height="1.5" fill="#283850"/><rect x="0.4" y="7.8" width="9.6" height="3.4" rx="0.5" fill="#eef2f6" stroke="#6e84a4" stroke-width="0.6"/><rect x="1.4" y="8.8" width="2" height="1.3" fill="#e04848"/><rect x="6.8" y="8.8" width="2.2" height="1.3" fill="#707880"/></svg>
<div class="a" style="left:282px;top:308.86px;width:1.1px;height:9.6px;background:#5a9a6a"></div>
<div class="a" style="left:5px;top:331.98px;width:750.4px;height:1px;background:#e4e4e4"></div>
<svg class="a" style="left:28.8px;top:320.22px" width="10.4" height="11.6" viewBox="0 0 10.4 11.6"><defs><linearGradient id="mg7" x1="0" y1="0" x2="0.3" y2="1"><stop offset="0" stop-color="#a8d8fa"/><stop offset="0.5" stop-color="#62aef0"/><stop offset="1" stop-color="#3a84d8"/></linearGradient></defs><rect x="0.4" y="0.5" width="9.6" height="5.6" rx="0.6" fill="url(#mg7)" stroke="#3c70b0" stroke-width="0.6"/><rect x="3.6" y="6.1" width="3.2" height="1.5" fill="#283850"/><rect x="0.4" y="7.8" width="9.6" height="3.4" rx="0.5" fill="#eef2f6" stroke="#6e84a4" stroke-width="0.6"/><rect x="1.4" y="8.8" width="2" height="1.3" fill="#e04848"/><rect x="6.8" y="8.8" width="2.2" height="1.3" fill="#707880"/></svg>
<div class="a" style="left:282px;top:321.62px;width:1.1px;height:9.6px;background:#5a9a6a"></div>
<div class="a" style="left:5px;top:344.74px;width:750.4px;height:1px;background:#e4e4e4"></div>
<svg class="a" style="left:28.8px;top:332.98px" width="10.4" height="11.6" viewBox="0 0 10.4 11.6"><defs><linearGradient id="mg8" x1="0" y1="0" x2="0.3" y2="1"><stop offset="0" stop-color="#a8d8fa"/><stop offset="0.5" stop-color="#62aef0"/><stop offset="1" stop-color="#3a84d8"/></linearGradient></defs><rect x="0.4" y="0.5" width="9.6" height="5.6" rx="0.6" fill="url(#mg8)" stroke="#3c70b0" stroke-width="0.6"/><rect x="3.6" y="6.1" width="3.2" height="1.5" fill="#283850"/><rect x="0.4" y="7.8" width="9.6" height="3.4" rx="0.5" fill="#eef2f6" stroke="#6e84a4" stroke-width="0.6"/><rect x="1.4" y="8.8" width="2" height="1.3" fill="#e04848"/><rect x="6.8" y="8.8" width="2.2" height="1.3" fill="#707880"/></svg>
<div class="a" style="left:282px;top:334.38px;width:1.1px;height:9.6px;background:#5a9a6a"></div>
<div class="a" style="left:5px;top:357.50px;width:750.4px;height:1px;background:#e4e4e4"></div>
<svg class="a" style="left:28.8px;top:345.74px" width="10.4" height="11.6" viewBox="0 0 10.4 11.6"><defs><linearGradient id="mg9" x1="0" y1="0" x2="0.3" y2="1"><stop offset="0" stop-color="#a8d8fa"/><stop offset="0.5" stop-color="#62aef0"/><stop offset="1" stop-color="#3a84d8"/></linearGradient></defs><rect x="0.4" y="0.5" width="9.6" height="5.6" rx="0.6" fill="url(#mg9)" stroke="#3c70b0" stroke-width="0.6"/><rect x="3.6" y="6.1" width="3.2" height="1.5" fill="#283850"/><rect x="0.4" y="7.8" width="9.6" height="3.4" rx="0.5" fill="#eef2f6" stroke="#6e84a4" stroke-width="0.6"/><rect x="1.4" y="8.8" width="2" height="1.3" fill="#e04848"/><rect x="6.8" y="8.8" width="2.2" height="1.3" fill="#707880"/></svg>
<div class="a" style="left:282px;top:347.14px;width:1.1px;height:9.6px;background:#5a9a6a"></div>
<div class="a" style="left:5px;top:370.26px;width:750.4px;height:1px;background:#e4e4e4"></div>
<svg class="a" style="left:28.8px;top:358.50px" width="10.4" height="11.6" viewBox="0 0 10.4 11.6"><defs><linearGradient id="mg10" x1="0" y1="0" x2="0.3" y2="1"><stop offset="0" stop-color="#a8d8fa"/><stop offset="0.5" stop-color="#62aef0"/><stop offset="1" stop-color="#3a84d8"/></linearGradient></defs><rect x="0.4" y="0.5" width="9.6" height="5.6" rx="0.6" fill="url(#mg10)" stroke="#3c70b0" stroke-width="0.6"/><rect x="3.6" y="6.1" width="3.2" height="1.5" fill="#283850"/><rect x="0.4" y="7.8" width="9.6" height="3.4" rx="0.5" fill="#eef2f6" stroke="#6e84a4" stroke-width="0.6"/><rect x="1.4" y="8.8" width="2" height="1.3" fill="#e04848"/><rect x="6.8" y="8.8" width="2.2" height="1.3" fill="#707880"/></svg>
<div class="a" style="left:282px;top:359.90px;width:1.1px;height:9.6px;background:#5a9a6a"></div>
<div class="a" style="left:5px;top:383.02px;width:750.4px;height:1px;background:#e4e4e4"></div>
<svg class="a" style="left:28.8px;top:371.26px" width="10.4" height="11.6" viewBox="0 0 10.4 11.6"><defs><linearGradient id="mg11" x1="0" y1="0" x2="0.3" y2="1"><stop offset="0" stop-color="#a8d8fa"/><stop offset="0.5" stop-color="#62aef0"/><stop offset="1" stop-color="#3a84d8"/></linearGradient></defs><rect x="0.4" y="0.5" width="9.6" height="5.6" rx="0.6" fill="url(#mg11)" stroke="#3c70b0" stroke-width="0.6"/><rect x="3.6" y="6.1" width="3.2" height="1.5" fill="#283850"/><rect x="0.4" y="7.8" width="9.6" height="3.4" rx="0.5" fill="#eef2f6" stroke="#6e84a4" stroke-width="0.6"/><rect x="1.4" y="8.8" width="2" height="1.3" fill="#e04848"/><rect x="6.8" y="8.8" width="2.2" height="1.3" fill="#707880"/></svg>
<div class="a" style="left:282px;top:372.66px;width:1.1px;height:9.6px;background:#5a9a6a"></div>
<div class="a" style="left:5px;top:395.78px;width:750.4px;height:1px;background:#e4e4e4"></div>
<svg class="a" style="left:28.8px;top:384.02px" width="10.4" height="11.6" viewBox="0 0 10.4 11.6"><defs><linearGradient id="mg12" x1="0" y1="0" x2="0.3" y2="1"><stop offset="0" stop-color="#a8d8fa"/><stop offset="0.5" stop-color="#62aef0"/><stop offset="1" stop-color="#3a84d8"/></linearGradient></defs><rect x="0.4" y="0.5" width="9.6" height="5.6" rx="0.6" fill="url(#mg12)" stroke="#3c70b0" stroke-width="0.6"/><rect x="3.6" y="6.1" width="3.2" height="1.5" fill="#283850"/><rect x="0.4" y="7.8" width="9.6" height="3.4" rx="0.5" fill="#eef2f6" stroke="#6e84a4" stroke-width="0.6"/><rect x="1.4" y="8.8" width="2" height="1.3" fill="#e04848"/><rect x="6.8" y="8.8" width="2.2" height="1.3" fill="#707880"/></svg>
<div class="a" style="left:282px;top:385.42px;width:1.1px;height:9.6px;background:#5a9a6a"></div>
<div class="a" style="left:5px;top:408.54px;width:750.4px;height:1px;background:#e4e4e4"></div>
<svg class="a" style="left:28.8px;top:396.78px" width="10.4" height="11.6" viewBox="0 0 10.4 11.6"><defs><linearGradient id="mg13" x1="0" y1="0" x2="0.3" y2="1"><stop offset="0" stop-color="#a8d8fa"/><stop offset="0.5" stop-color="#62aef0"/><stop offset="1" stop-color="#3a84d8"/></linearGradient></defs><rect x="0.4" y="0.5" width="9.6" height="5.6" rx="0.6" fill="url(#mg13)" stroke="#3c70b0" stroke-width="0.6"/><rect x="3.6" y="6.1" width="3.2" height="1.5" fill="#283850"/><rect x="0.4" y="7.8" width="9.6" height="3.4" rx="0.5" fill="#eef2f6" stroke="#6e84a4" stroke-width="0.6"/><rect x="1.4" y="8.8" width="2" height="1.3" fill="#e04848"/><rect x="6.8" y="8.8" width="2.2" height="1.3" fill="#707880"/></svg>
<div class="a" style="left:282px;top:398.18px;width:1.1px;height:9.6px;background:#5a9a6a"></div>
<div class="a" style="left:755.4px;top:213.6px;width:11.1px;height:196.4px;background:#efefef;border-left:1px solid #e8e8e8"></div>
<svg class="a" style="left:758.5px;top:219px" width="5" height="3" viewBox="0 0 5 3"><path d="M0 3 H5 L2.5 0Z" fill="#333"/></svg>
<div class="a" style="left:756.4px;top:387.4px;width:9.4px;height:24px;background:linear-gradient(90deg,#f4f4f4,#e2e2e2);border:1px solid #b4b4b4;border-radius:2px"></div>
<div class="a" style="left:759px;top:404.5px;width:4.4px;height:0.8px;background:#707a70"></div><div class="a" style="left:759px;top:406.3px;width:4.4px;height:0.8px;background:#707a70"></div><div class="a" style="left:759px;top:408.1px;width:4.4px;height:0.8px;background:#707a70"></div>
<div class="a" style="left:766.5px;top:213.6px;width:1.5px;height:196.4px;background:#f4f4f4"></div>
<div class="a" style="left:632.4px;top:195.5px;width:134.1px;height:16px;background:#ffffff;border:1px solid #c0c8d4"></div>
<div class="a" style="left:757px;top:196.3px;width:8.8px;height:14.4px;background:#c6cfdc"></div>
<svg class="a" style="left:758.9px;top:202px" width="5" height="3" viewBox="0 0 5 3"><path d="M0 0 H5 L2.5 3Z" fill="#222"/></svg>
<div class="t" style="left:22.20px;top:5.10px;font-size:8.7px;font-weight:normal;color:#eef1f5;transform:scaleX(0.8745);transform-origin:0 0;">Start Page</div>
<div class="t" style="left:92.98px;top:5.00px;font-size:8.7px;font-weight:normal;color:#1e1e1e;transform:scaleX(0.9210);transform-origin:0 0;">Standard Appli... - Performance</div>
<div class="t" style="left:369.52px;top:26.80px;font-size:8.7px;font-weight:normal;color:#1e1e1e;transform:scaleX(0.8131);transform-origin:0 0;">1 Sec</div>
<div class="t" style="left:428.71px;top:26.80px;font-size:8.7px;font-weight:normal;color:#1e1e1e;transform:scaleX(0.8311);transform-origin:0 0;">10 Sec</div>
<div class="t" style="left:491.66px;top:26.80px;font-size:8.7px;font-weight:normal;color:#1e1e1e;transform:scaleX(0.9876);transform-origin:0 0;">1 Min</div>
<div class="t" style="left:552.37px;top:26.80px;font-size:8.7px;font-weight:normal;color:#1e1e1e;transform:scaleX(0.9574);transform-origin:0 0;">10 Min</div>
<div class="t" style="left:613.96px;top:26.80px;font-size:8.7px;font-weight:normal;color:#1e1e1e;transform:scaleX(0.9652);transform-origin:0 0;">1 Hour</div>
<div class="t" style="left:678.89px;top:26.80px;font-size:8.7px;font-weight:normal;color:#1e1e1e;transform:scaleX(0.8770);transform-origin:0 0;">1 Day</div>
<div class="t" style="left:722.88px;top:23.91px;font-size:8.7px;font-weight:normal;color:#1e1e1e;transform:scaleX(0.9185);transform-origin:0 0;">Data Type</div>
<div class="t" style="left:14.75px;top:42.60px;font-size:10.7px;font-weight:normal;color:#1e1e1e;transform:scaleX(1.0406);transform-origin:0 0;-webkit-text-stroke:0.05px currentColor">Traffic</div>
<div class="t" style="left:493.39px;top:55.61px;font-size:8.7px;font-weight:normal;color:#262626;transform:scaleX(0.9018);transform-origin:0 0;-webkit-text-stroke:0.05px currentColor">Total Bytes</div>
<div class="t" style="left:563.18px;top:55.61px;font-size:8.7px;font-weight:normal;color:#262626;transform:scaleX(0.9075);transform-origin:0 0;-webkit-text-stroke:0.05px currentColor">Uplink Bytes</div>
<div class="t" style="left:638.58px;top:55.61px;font-size:8.7px;font-weight:normal;color:#262626;transform:scaleX(0.9183);transform-origin:0 0;-webkit-text-stroke:0.05px currentColor">Downlink Bytes</div>
<div class="t" style="left:723.69px;top:55.61px;font-size:8.7px;font-weight:normal;color:#262626;transform:scaleX(0.8961);transform-origin:0 0;-webkit-text-stroke:0.05px currentColor">Alarms</div>
<div class="t" style="left:7.10px;top:63.31px;font-size:7.4px;font-weight:normal;color:#383838;transform:scaleX(1.0175);transform-origin:0 0;-webkit-text-stroke:0.05px currentColor">400.0 Mbps</div>
<div class="t" style="left:7.10px;top:81.31px;font-size:7.4px;font-weight:normal;color:#383838;transform:scaleX(1.0175);transform-origin:0 0;-webkit-text-stroke:0.05px currentColor">300.0 Mbps</div>
<div class="t" style="left:7.10px;top:99.31px;font-size:7.4px;font-weight:normal;color:#383838;transform:scaleX(1.0175);transform-origin:0 0;-webkit-text-stroke:0.05px currentColor">200.0 Mbps</div>
<div class="t" style="left:7.10px;top:117.31px;font-size:7.4px;font-weight:normal;color:#383838;transform:scaleX(1.0175);transform-origin:0 0;-webkit-text-stroke:0.05px currentColor">100.0 Mbps</div>
<div class="t" style="left:20.79px;top:135.31px;font-size:7.4px;font-weight:normal;color:#383838;transform:scaleX(1.0567);transform-origin:0 0;-webkit-text-stroke:0.05px currentColor">0.0 bps</div>
<div class="t" style="left:169.41px;top:46.34px;font-size:7.6px;font-weight:normal;color:#3a3a3a;transform:scaleX(0.9564);transform-origin:0 0;-webkit-text-stroke:0.05px currentColor">02/16/2016  15:36:08 - 15:36:37</div>
<div class="t" style="left:44.71px;top:146.81px;font-size:7.4px;font-weight:normal;color:#383838;transform:scaleX(0.9849);transform-origin:0 0;-webkit-text-stroke:0.05px currentColor">02/16 15:35:00</div>
<div class="t" style="left:144.31px;top:146.81px;font-size:7.4px;font-weight:normal;color:#383838;transform:scaleX(0.9933);transform-origin:0 0;-webkit-text-stroke:0.05px currentColor">15:35:30</div>
<div class="t" style="left:234.31px;top:146.81px;font-size:7.4px;font-weight:normal;color:#383838;transform:scaleX(0.9933);transform-origin:0 0;-webkit-text-stroke:0.05px currentColor">15:36:00</div>
<div class="t" style="left:324.21px;top:146.81px;font-size:7.4px;font-weight:normal;color:#383838;transform:scaleX(0.9933);transform-origin:0 0;-webkit-text-stroke:0.05px currentColor">15:36:30</div>
<div class="t" style="left:413.21px;top:146.81px;font-size:7.4px;font-weight:normal;color:#383838;transform:scaleX(0.9933);transform-origin:0 0;-webkit-text-stroke:0.05px currentColor">15:37:00</div>
<div class="t" style="left:503.01px;top:146.81px;font-size:7.4px;font-weight:normal;color:#383838;transform:scaleX(0.9933);transform-origin:0 0;-webkit-text-stroke:0.05px currentColor">15:37:30</div>
<div class="t" style="left:592.21px;top:146.81px;font-size:7.4px;font-weight:normal;color:#383838;transform:scaleX(0.9933);transform-origin:0 0;-webkit-text-stroke:0.05px currentColor">15:38:00</div>
<div class="t" style="left:681.21px;top:146.81px;font-size:7.4px;font-weight:normal;color:#383838;transform:scaleX(0.9933);transform-origin:0 0;-webkit-text-stroke:0.05px currentColor">15:38:30</div>
<div class="t" style="left:8.57px;top:163.10px;font-size:8.7px;font-weight:normal;color:#e6eaf0;transform:scaleX(0.9478);transform-origin:0 0;">Client</div>
<div class="t" style="left:48.66px;top:163.53px;font-size:8.2px;font-weight:bold;color:#1e1e1e;transform:scaleX(1.0224);transform-origin:0 0;">Server</div>
<div class="t" style="left:93.88px;top:163.10px;font-size:8.7px;font-weight:normal;color:#e6eaf0;transform:scaleX(0.9261);transform-origin:0 0;">Network Segment</div>
<div class="t" style="left:177.08px;top:163.10px;font-size:8.7px;font-weight:normal;color:#f2f4f7;transform:scaleX(0.9104);transform-origin:0 0;">IP Conversation</div>
<div class="t" style="left:252.48px;top:163.10px;font-size:8.7px;font-weight:normal;color:#e6eaf0;transform:scaleX(0.9097);transform-origin:0 0;">TCP Conversation</div>
<div class="t" style="left:335.57px;top:163.10px;font-size:8.7px;font-weight:normal;color:#e6eaf0;transform:scaleX(0.9622);transform-origin:0 0;">Application Alarms</div>
<div class="t" style="left:423.08px;top:163.10px;font-size:8.7px;font-weight:normal;color:#e6eaf0;transform:scaleX(0.9072);transform-origin:0 0;">Packet Size Distribution</div>
<div class="t" style="left:7.99px;top:179.91px;font-size:8.7px;font-weight:normal;color:#1e1e1e;transform:scaleX(0.8779);transform-origin:0 0;">Selected time range:02/16/2016  15:35:08 - 15:36:37</div>
<div class="t" style="left:706.69px;top:179.91px;font-size:8.7px;font-weight:normal;color:#1e1e1e;transform:scaleX(0.8939);transform-origin:0 0;">Server[85/85]</div>
<div class="t" style="left:28.70px;top:218.10px;font-size:8.7px;font-weight:normal;color:#1e1e1e;transform:scaleX(0.8555);transform-origin:0 0;">Server</div>
<div class="t" style="left:162.99px;top:218.10px;font-size:8.7px;font-weight:normal;color:#1e1e1e;transform:scaleX(0.8862);transform-origin:0 0;">Server Geo Location</div>
<div class="t" style="left:284.18px;top:218.10px;font-size:8.7px;font-weight:normal;color:#1e1e1e;transform:scaleX(0.9257);transform-origin:0 0;">Total Bytes</div>
<div class="t" style="left:364.58px;top:218.10px;font-size:8.7px;font-weight:normal;color:#1e1e1e;transform:scaleX(0.9200);transform-origin:0 0;">Total Packets</div>
<div class="t" style="left:444.88px;top:218.10px;font-size:8.7px;font-weight:normal;color:#1e1e1e;transform:scaleX(0.9117);transform-origin:0 0;">Uplink Bytes</div>
<div class="t" style="left:525.78px;top:218.10px;font-size:8.7px;font-weight:normal;color:#1e1e1e;transform:scaleX(0.9183);transform-origin:0 0;">Downlink Bytes</div>
<div class="t" style="left:606.18px;top:218.10px;font-size:8.7px;font-weight:normal;color:#1e1e1e;transform:scaleX(0.9238);transform-origin:0 0;">Uplink Pkts</div>
<div class="t" style="left:686.87px;top:218.10px;font-size:8.7px;font-weight:normal;color:#1e1e1e;transform:scaleX(0.9356);transform-origin:0 0;">Downlink Pkts</div>
<div class="t" style="left:42.10px;top:233.11px;font-size:8.7px;font-weight:normal;color:#1e1e1e;transform:scaleX(0.8550);transform-origin:0 0;">216.58.221.35</div>
<div class="t" style="left:163.28px;top:233.11px;font-size:8.7px;font-weight:normal;color:#1e1e1e;transform:scaleX(0.9270);transform-origin:0 0;">California, United States</div>
<div class="t" style="left:326.76px;top:233.11px;font-size:8.7px;font-weight:normal;color:#4a8662;transform:scaleX(0.8550);transform-origin:0 0;">198.00 B</div>
<div class="t" style="left:364.70px;top:233.11px;font-size:8.7px;font-weight:normal;color:#1e1e1e;transform:scaleX(0.8550);transform-origin:0 0;">3</div>
<div class="t" style="left:444.90px;top:233.11px;font-size:8.7px;font-weight:normal;color:#1e1e1e;transform:scaleX(0.8550);transform-origin:0 0;">198.00 B</div>
<div class="t" style="left:525.80px;top:233.11px;font-size:8.7px;font-weight:normal;color:#1e1e1e;transform:scaleX(0.8550);transform-origin:0 0;">0.00 B</div>
<div class="t" style="left:606.20px;top:233.11px;font-size:8.7px;font-weight:normal;color:#1e1e1e;transform:scaleX(0.8550);transform-origin:0 0;">3</div>
<div class="t" style="left:686.90px;top:233.11px;font-size:8.7px;font-weight:normal;color:#1e1e1e;transform:scaleX(0.8550);transform-origin:0 0;">0</div>
<div class="t" style="left:42.10px;top:245.87px;font-size:8.7px;font-weight:normal;color:#1e1e1e;transform:scaleX(0.8550);transform-origin:0 0;">74.125.204.113</div>
<div class="t" style="left:163.28px;top:245.87px;font-size:8.7px;font-weight:normal;color:#1e1e1e;transform:scaleX(0.9270);transform-origin:0 0;">California, United States</div>
<div class="t" style="left:326.76px;top:245.87px;font-size:8.7px;font-weight:normal;color:#4a8662;transform:scaleX(0.8550);transform-origin:0 0;">140.00 B</div>
<div class="t" style="left:364.70px;top:245.87px;font-size:8.7px;font-weight:normal;color:#1e1e1e;transform:scaleX(0.8550);transform-origin:0 0;">2</div>
<div class="t" style="left:444.90px;top:245.87px;font-size:8.7px;font-weight:normal;color:#1e1e1e;transform:scaleX(0.8550);transform-origin:0 0;">140.00 B</div>
<div class="t" style="left:525.80px;top:245.87px;font-size:8.7px;font-weight:normal;color:#1e1e1e;transform:scaleX(0.8550);transform-origin:0 0;">0.00 B</div>
<div class="t" style="left:606.20px;top:245.87px;font-size:8.7px;font-weight:normal;color:#1e1e1e;transform:scaleX(0.8550);transform-origin:0 0;">2</div>
<div class="t" style="left:686.90px;top:245.87px;font-size:8.7px;font-weight:normal;color:#1e1e1e;transform:scaleX(0.8550);transform-origin:0 0;">0</div>
<div class="t" style="left:42.10px;top:258.63px;font-size:8.7px;font-weight:normal;color:#1e1e1e;transform:scaleX(0.8550);transform-origin:0 0;">84.25.182.28</div>
<div class="t" style="left:163.28px;top:258.63px;font-size:8.7px;font-weight:normal;color:#1e1e1e;transform:scaleX(0.9270);transform-origin:0 0;">Limburg, Netherlands</div>
<div class="t" style="left:326.76px;top:258.63px;font-size:8.7px;font-weight:normal;color:#4a8662;transform:scaleX(0.8550);transform-origin:0 0;">128.00 B</div>
<div class="t" style="left:364.70px;top:258.63px;font-size:8.7px;font-weight:normal;color:#1e1e1e;transform:scaleX(0.8550);transform-origin:0 0;">2</div>
<div class="t" style="left:444.90px;top:258.63px;font-size:8.7px;font-weight:normal;color:#1e1e1e;transform:scaleX(0.8550);transform-origin:0 0;">128.00 B</div>
<div class="t" style="left:525.80px;top:258.63px;font-size:8.7px;font-weight:normal;color:#1e1e1e;transform:scaleX(0.8550);transform-origin:0 0;">0.00 B</div>
<div class="t" style="left:606.20px;top:258.63px;font-size:8.7px;font-weight:normal;color:#1e1e1e;transform:scaleX(0.8550);transform-origin:0 0;">2</div>
<div class="t" style="left:686.90px;top:258.63px;font-size:8.7px;font-weight:normal;color:#1e1e1e;transform:scaleX(0.8550);transform-origin:0 0;">0</div>
<div class="t" style="left:42.10px;top:271.39px;font-size:8.7px;font-weight:normal;color:#1e1e1e;transform:scaleX(0.8550);transform-origin:0 0;">213.10.166.47</div>
<div class="t" style="left:163.28px;top:271.39px;font-size:8.7px;font-weight:normal;color:#1e1e1e;transform:scaleX(0.9270);transform-origin:0 0;">Zuid-Holland, Netherlands</div>
<div class="t" style="left:330.89px;top:271.39px;font-size:8.7px;font-weight:normal;color:#4a8662;transform:scaleX(0.8550);transform-origin:0 0;">64.00 B</div>
<div class="t" style="left:364.70px;top:271.39px;font-size:8.7px;font-weight:normal;color:#1e1e1e;transform:scaleX(0.8550);transform-origin:0 0;">1</div>
<div class="t" style="left:444.90px;top:271.39px;font-size:8.7px;font-weight:normal;color:#1e1e1e;transform:scaleX(0.8550);transform-origin:0 0;">64.00 B</div>
<div class="t" style="left:525.80px;top:271.39px;font-size:8.7px;font-weight:normal;color:#1e1e1e;transform:scaleX(0.8550);transform-origin:0 0;">0.00 B</div>
<div class="t" style="left:606.20px;top:271.39px;font-size:8.7px;font-weight:normal;color:#1e1e1e;transform:scaleX(0.8550);transform-origin:0 0;">1</div>
<div class="t" style="left:686.90px;top:271.39px;font-size:8.7px;font-weight:normal;color:#1e1e1e;transform:scaleX(0.8550);transform-origin:0 0;">0</div>
<div class="t" style="left:42.10px;top:284.15px;font-size:8.7px;font-weight:normal;color:#1e1e1e;transform:scaleX(0.8550);transform-origin:0 0;">201.255.115.93</div>
<div class="t" style="left:163.28px;top:284.15px;font-size:8.7px;font-weight:normal;color:#1e1e1e;transform:scaleX(0.9270);transform-origin:0 0;">Buenos Aires, Argentina</div>
<div class="t" style="left:330.89px;top:284.15px;font-size:8.7px;font-weight:normal;color:#4a8662;transform:scaleX(0.8550);transform-origin:0 0;">64.00 B</div>
<div class="t" style="left:364.70px;top:284.15px;font-size:8.7px;font-weight:normal;color:#1e1e1e;transform:scaleX(0.8550);transform-origin:0 0;">1</div>
<div class="t" style="left:444.90px;top:284.15px;font-size:8.7px;font-weight:normal;color:#1e1e1e;transform:scaleX(0.8550);transform-origin:0 0;">64.00 B</div>
<div class="t" style="left:525.80px;top:284.15px;font-size:8.7px;font-weight:normal;color:#1e1e1e;transform:scaleX(0.8550);transform-origin:0 0;">0.00 B</div>
<div class="t" style="left:606.20px;top:284.15px;font-size:8.7px;font-weight:normal;color:#1e1e1e;transform:scaleX(0.8550);transform-origin:0 0;">1</div>
<div class="t" style="left:686.90px;top:284.15px;font-size:8.7px;font-weight:normal;color:#1e1e1e;transform:scaleX(0.8550);transform-origin:0 0;">0</div>
<div class="t" style="left:42.10px;top:296.91px;font-size:8.7px;font-weight:normal;color:#1e1e1e;transform:scaleX(0.8550);transform-origin:0 0;">59.112.221.80</div>
<div class="t" style="left:163.28px;top:296.91px;font-size:8.7px;font-weight:normal;color:#1e1e1e;transform:scaleX(0.9270);transform-origin:0 0;">T&#39;ai-pei, Taiwan</div>
<div class="t" style="left:330.89px;top:296.91px;font-size:8.7px;font-weight:normal;color:#4a8662;transform:scaleX(0.8550);transform-origin:0 0;">64.00 B</div>
<div class="t" style="left:364.70px;top:296.91px;font-size:8.7px;font-weight:normal;color:#1e1e1e;transform:scaleX(0.8550);transform-origin:0 0;">1</div>
<div class="t" style="left:444.90px;top:296.91px;font-size:8.7px;font-weight:normal;color:#1e1e1e;transform:scaleX(0.8550);transform-origin:0 0;">64.00 B</div>
<div class="t" style="left:525.80px;top:296.91px;font-size:8.7px;font-weight:normal;color:#1e1e1e;transform:scaleX(0.8550);transform-origin:0 0;">0.00 B</div>
<div class="t" style="left:606.20px;top:296.91px;font-size:8.7px;font-weight:normal;color:#1e1e1e;transform:scaleX(0.8550);transform-origin:0 0;">1</div>
<div class="t" style="left:686.90px;top:296.91px;font-size:8.7px;font-weight:normal;color:#1e1e1e;transform:scaleX(0.8550);transform-origin:0 0;">0</div>
<div class="t" style="left:42.10px;top:309.67px;font-size:8.7px;font-weight:normal;color:#1e1e1e;transform:scaleX(0.8550);transform-origin:0 0;">88.254.101.88</div>
<div class="t" style="left:163.28px;top:309.67px;font-size:8.7px;font-weight:normal;color:#1e1e1e;transform:scaleX(0.9270);transform-origin:0 0;">Hatay, Turkey</div>
<div class="t" style="left:330.89px;top:309.67px;font-size:8.7px;font-weight:normal;color:#4a8662;transform:scaleX(0.8550);transform-origin:0 0;">64.00 B</div>
<div class="t" style="left:364.70px;top:309.67px;font-size:8.7px;font-weight:normal;color:#1e1e1e;transform:scaleX(0.8550);transform-origin:0 0;">1</div>
<div class="t" style="left:444.90px;top:309.67px;font-size:8.7px;font-weight:normal;color:#1e1e1e;transform:scaleX(0.8550);transform-origin:0 0;">64.00 B</div>
<div class="t" style="left:525.80px;top:309.67px;font-size:8.7px;font-weight:normal;color:#1e1e1e;transform:scaleX(0.8550);transform-origin:0 0;">0.00 B</div>
<div class="t" style="left:606.20px;top:309.67px;font-size:8.7px;font-weight:normal;color:#1e1e1e;transform:scaleX(0.8550);transform-origin:0 0;">1</div>
<div class="t" style="left:686.90px;top:309.67px;font-size:8.7px;font-weight:normal;color:#1e1e1e;transform:scaleX(0.8550);transform-origin:0 0;">0</div>
<div class="t" style="left:42.10px;top:322.43px;font-size:8.7px;font-weight:normal;color:#1e1e1e;transform:scaleX(0.8550);transform-origin:0 0;">85.105.212.49</div>
<div class="t" style="left:163.28px;top:322.43px;font-size:8.7px;font-weight:normal;color:#1e1e1e;transform:scaleX(0.9270);transform-origin:0 0;">Istanbul, Turkey</div>
<div class="t" style="left:330.89px;top:322.43px;font-size:8.7px;font-weight:normal;color:#4a8662;transform:scaleX(0.8550);transform-origin:0 0;">64.00 B</div>
<div class="t" style="left:364.70px;top:322.43px;font-size:8.7px;font-weight:normal;color:#1e1e1e;transform:scaleX(0.8550);transform-origin:0 0;">1</div>
<div class="t" style="left:444.90px;top:322.43px;font-size:8.7px;font-weight:normal;color:#1e1e1e;transform:scaleX(0.8550);transform-origin:0 0;">64.00 B</div>
<div class="t" style="left:525.80px;top:322.43px;font-size:8.7px;font-weight:normal;color:#1e1e1e;transform:scaleX(0.8550);transform-origin:0 0;">0.00 B</div>
<div class="t" style="left:606.20px;top:322.43px;font-size:8.7px;font-weight:normal;color:#1e1e1e;transform:scaleX(0.8550);transform-origin:0 0;">1</div>
<div class="t" style="left:686.90px;top:322.43px;font-size:8.7px;font-weight:normal;color:#1e1e1e;transform:scaleX(0.8550);transform-origin:0 0;">0</div>
<div class="t" style="left:42.10px;top:335.19px;font-size:8.7px;font-weight:normal;color:#1e1e1e;transform:scaleX(0.8550);transform-origin:0 0;">83.57.147.22</div>
<div class="t" style="left:163.28px;top:335.19px;font-size:8.7px;font-weight:normal;color:#1e1e1e;transform:scaleX(0.9270);transform-origin:0 0;">Andalucia, Spain</div>
<div class="t" style="left:330.89px;top:335.19px;font-size:8.7px;font-weight:normal;color:#4a8662;transform:scaleX(0.8550);transform-origin:0 0;">64.00 B</div>
<div class="t" style="left:364.70px;top:335.19px;font-size:8.7px;font-weight:normal;color:#1e1e1e;transform:scaleX(0.8550);transform-origin:0 0;">1</div>
<div class="t" style="left:444.90px;top:335.19px;font-size:8.7px;font-weight:normal;color:#1e1e1e;transform:scaleX(0.8550);transform-origin:0 0;">64.00 B</div>
<div class="t" style="left:525.80px;top:335.19px;font-size:8.7px;font-weight:normal;color:#1e1e1e;transform:scaleX(0.8550);transform-origin:0 0;">0.00 B</div>
<div class="t" style="left:606.20px;top:335.19px;font-size:8.7px;font-weight:normal;color:#1e1e1e;transform:scaleX(0.8550);transform-origin:0 0;">1</div>
<div class="t" style="left:686.90px;top:335.19px;font-size:8.7px;font-weight:normal;color:#1e1e1e;transform:scaleX(0.8550);transform-origin:0 0;">0</div>
<div class="t" style="left:42.10px;top:347.95px;font-size:8.7px;font-weight:normal;color:#1e1e1e;transform:scaleX(0.8550);transform-origin:0 0;">59.48.242.213</div>
<div class="t" style="left:163.28px;top:347.95px;font-size:8.7px;font-weight:normal;color:#1e1e1e;transform:scaleX(0.9270);transform-origin:0 0;">Shanxi, China</div>
<div class="t" style="left:335.02px;top:347.95px;font-size:8.7px;font-weight:normal;color:#4a8662;transform:scaleX(0.8550);transform-origin:0 0;">0.00 B</div>
<div class="t" style="left:364.70px;top:347.95px;font-size:8.7px;font-weight:normal;color:#1e1e1e;transform:scaleX(0.8550);transform-origin:0 0;">0</div>
<div class="t" style="left:444.90px;top:347.95px;font-size:8.7px;font-weight:normal;color:#1e1e1e;transform:scaleX(0.8550);transform-origin:0 0;">0.00 B</div>
<div class="t" style="left:525.80px;top:347.95px;font-size:8.7px;font-weight:normal;color:#1e1e1e;transform:scaleX(0.8550);transform-origin:0 0;">0.00 B</div>
<div class="t" style="left:606.20px;top:347.95px;font-size:8.7px;font-weight:normal;color:#1e1e1e;transform:scaleX(0.8550);transform-origin:0 0;">0</div>
<div class="t" style="left:686.90px;top:347.95px;font-size:8.7px;font-weight:normal;color:#1e1e1e;transform:scaleX(0.8550);transform-origin:0 0;">0</div>
<div class="t" style="left:42.10px;top:360.71px;font-size:8.7px;font-weight:normal;color:#1e1e1e;transform:scaleX(0.8550);transform-origin:0 0;">192.168.9.50</div>
<div class="t" style="left:163.28px;top:360.71px;font-size:8.7px;font-weight:normal;color:#1e1e1e;transform:scaleX(0.9270);transform-origin:0 0;">Private Address</div>
<div class="t" style="left:335.02px;top:360.71px;font-size:8.7px;font-weight:normal;color:#4a8662;transform:scaleX(0.8550);transform-origin:0 0;">0.00 B</div>
<div class="t" style="left:364.70px;top:360.71px;font-size:8.7px;font-weight:normal;color:#1e1e1e;transform:scaleX(0.8550);transform-origin:0 0;">0</div>
<div class="t" style="left:444.90px;top:360.71px;font-size:8.7px;font-weight:normal;color:#1e1e1e;transform:scaleX(0.8550);transform-origin:0 0;">0.00 B</div>
<div class="t" style="left:525.80px;top:360.71px;font-size:8.7px;font-weight:normal;color:#1e1e1e;transform:scaleX(0.8550);transform-origin:0 0;">0.00 B</div>
<div class="t" style="left:606.20px;top:360.71px;font-size:8.7px;font-weight:normal;color:#1e1e1e;transform:scaleX(0.8550);transform-origin:0 0;">0</div>
<div class="t" style="left:686.90px;top:360.71px;font-size:8.7px;font-weight:normal;color:#1e1e1e;transform:scaleX(0.8550);transform-origin:0 0;">0</div>
<div class="t" style="left:42.10px;top:373.47px;font-size:8.7px;font-weight:normal;color:#1e1e1e;transform:scaleX(0.8550);transform-origin:0 0;">195.174.25.100</div>
<div class="t" style="left:163.28px;top:373.47px;font-size:8.7px;font-weight:normal;color:#1e1e1e;transform:scaleX(0.9270);transform-origin:0 0;">Konya, Turkey</div>
<div class="t" style="left:335.02px;top:373.47px;font-size:8.7px;font-weight:normal;color:#4a8662;transform:scaleX(0.8550);transform-origin:0 0;">0.00 B</div>
<div class="t" style="left:364.70px;top:373.47px;font-size:8.7px;font-weight:normal;color:#1e1e1e;transform:scaleX(0.8550);transform-origin:0 0;">0</div>
<div class="t" style="left:444.90px;top:373.47px;font-size:8.7px;font-weight:normal;color:#1e1e1e;transform:scaleX(0.8550);transform-origin:0 0;">0.00 B</div>
<div class="t" style="left:525.80px;top:373.47px;font-size:8.7px;font-weight:normal;color:#1e1e1e;transform:scaleX(0.8550);transform-origin:0 0;">0.00 B</div>
<div class="t" style="left:606.20px;top:373.47px;font-size:8.7px;font-weight:normal;color:#1e1e1e;transform:scaleX(0.8550);transform-origin:0 0;">0</div>
<div class="t" style="left:686.90px;top:373.47px;font-size:8.7px;font-weight:normal;color:#1e1e1e;transform:scaleX(0.8550);transform-origin:0 0;">0</div>
<div class="t" style="left:42.10px;top:386.23px;font-size:8.7px;font-weight:normal;color:#1e1e1e;transform:scaleX(0.8550);transform-origin:0 0;">201.215.214.178</div>
<div class="t" style="left:163.28px;top:386.23px;font-size:8.7px;font-weight:normal;color:#1e1e1e;transform:scaleX(0.9270);transform-origin:0 0;">Region Metropolitana, Chile</div>
<div class="t" style="left:335.02px;top:386.23px;font-size:8.7px;font-weight:normal;color:#4a8662;transform:scaleX(0.8550);transform-origin:0 0;">0.00 B</div>
<div class="t" style="left:364.70px;top:386.23px;font-size:8.7px;font-weight:normal;color:#1e1e1e;transform:scaleX(0.8550);transform-origin:0 0;">0</div>
<div class="t" style="left:444.90px;top:386.23px;font-size:8.7px;font-weight:normal;color:#1e1e1e;transform:scaleX(0.8550);transform-origin:0 0;">0.00 B</div>
<div class="t" style="left:525.80px;top:386.23px;font-size:8.7px;font-weight:normal;color:#1e1e1e;transform:scaleX(0.8550);transform-origin:0 0;">0.00 B</div>
<div class="t" style="left:606.20px;top:386.23px;font-size:8.7px;font-weight:normal;color:#1e1e1e;transform:scaleX(0.8550);transform-origin:0 0;">0</div>
<div class="t" style="left:686.90px;top:386.23px;font-size:8.7px;font-weight:normal;color:#1e1e1e;transform:scaleX(0.8550);transform-origin:0 0;">0</div>
<div class="t" style="left:42.10px;top:398.99px;font-size:8.7px;font-weight:normal;color:#1e1e1e;transform:scaleX(0.8550);transform-origin:0 0;">8.8.8.8</div>
<div class="t" style="left:163.28px;top:398.99px;font-size:8.7px;font-weight:normal;color:#1e1e1e;transform:scaleX(0.9270);transform-origin:0 0;">California, United States</div>
<div class="t" style="left:335.02px;top:398.99px;font-size:8.7px;font-weight:normal;color:#4a8662;transform:scaleX(0.8550);transform-origin:0 0;">0.00 B</div>
<div class="t" style="left:364.70px;top:398.99px;font-size:8.7px;font-weight:normal;color:#1e1e1e;transform:scaleX(0.8550);transform-origin:0 0;">0</div>
<div class="t" style="left:444.90px;top:398.99px;font-size:8.7px;font-weight:normal;color:#1e1e1e;transform:scaleX(0.8550);transform-origin:0 0;">0.00 B</div>
<div class="t" style="left:525.80px;top:398.99px;font-size:8.7px;font-weight:normal;color:#1e1e1e;transform:scaleX(0.8550);transform-origin:0 0;">0.00 B</div>
<div class="t" style="left:606.20px;top:398.99px;font-size:8.7px;font-weight:normal;color:#1e1e1e;transform:scaleX(0.8550);transform-origin:0 0;">0</div>
<div class="t" style="left:686.90px;top:398.99px;font-size:8.7px;font-weight:normal;color:#1e1e1e;transform:scaleX(0.8550);transform-origin:0 0;">0</div>
<div class="t" style="left:634.80px;top:199.41px;font-size:8.7px;font-weight:normal;color:#8c8c8c;transform:scaleX(0.8516);transform-origin:0 0;">Search Server</div>
</body></html>
